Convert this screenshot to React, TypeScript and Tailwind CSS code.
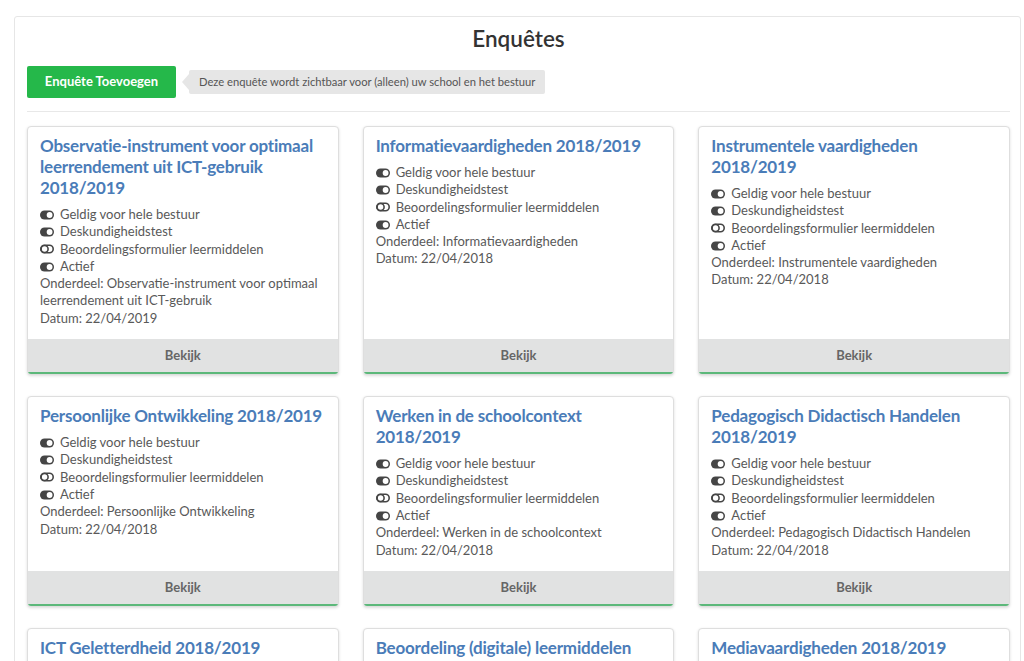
import React from "react";

type Survey = {
  id: number;
  title: string;
  onderdeel: string;
  datum: string;
};

const SURVEYS: Survey[] = [
  {
    id: 1,
    title: "Observatie-instrument voor optimaal leerrendement uit ICT-gebruik 2018/2019",
    onderdeel: "Observatie-instrument voor optimaal leerrendement uit ICT-gebruik",
    datum: "22/04/2019",
  },
  { id: 2, title: "Informatievaardigheden 2018/2019", onderdeel: "Informatievaardigheden", datum: "22/04/2018" },
  { id: 3, title: "Instrumentele vaardigheden 2018/2019", onderdeel: "Instrumentele vaardigheden", datum: "22/04/2018" },
  { id: 4, title: "Persoonlijke Ontwikkeling 2018/2019", onderdeel: "Persoonlijke Ontwikkeling", datum: "22/04/2018" },
  { id: 5, title: "Werken in de schoolcontext 2018/2019", onderdeel: "Werken in de schoolcontext", datum: "22/04/2018" },
  { id: 6, title: "Pedagogisch Didactisch Handelen 2018/2019", onderdeel: "Pedagogisch Didactisch Handelen", datum: "22/04/2018" },
  { id: 7, title: "ICT Geletterdheid 2018/2019", onderdeel: "ICT Geletterdheid", datum: "22/04/2018" },
  { id: 8, title: "Beoordeling (digitale) leermiddelen 2018/2019", onderdeel: "Beoordeling (digitale) leermiddelen", datum: "22/04/2018" },
  { id: 9, title: "Mediavaardigheden 2018/2019", onderdeel: "Mediavaardigheden", datum: "22/04/2018" },
];

const FLAGS = [
  { label: "Geldig voor hele bestuur", on: true },
  { label: "Deskundigheidstest", on: true },
  { label: "Beoordelingsformulier leermiddelen", on: false },
  { label: "Actief", on: true },
];

// font-awesome style toggle-on / toggle-off
function Toggle({ on }: { on: boolean }) {
  if (on) {
    return (
      <svg width="14" height="10" viewBox="0 0 14 10" className="shrink-0">
        <rect x="0" y="0.5" width="14" height="9" rx="4.5" fill="#454545" />
        <circle cx="9.6" cy="5" r="2.9" fill="#ffffff" />
      </svg>
    );
  }
  return (
    <svg width="14" height="10" viewBox="0 0 14 10" className="shrink-0">
      <rect x="0.8" y="1.3" width="12.4" height="7.4" rx="3.7" fill="none" stroke="#454545" strokeWidth="1.6" />
      <circle cx="4.6" cy="5" r="3.5" fill="#ffffff" stroke="#454545" strokeWidth="1.6" />
    </svg>
  );
}

function SurveyCard({ survey }: { survey: Survey }) {
  return (
    <div className="flex flex-col rounded-[4px] border border-[#dedede] bg-white shadow-[0_1px_3px_rgba(0,0,0,0.14)] overflow-hidden">
      <div className="flex-1 px-[12px] pt-2 pb-3">
        <h3 className="text-[17px] leading-[21px] font-bold tracking-[-0.2px] text-[#4a7cb8] mb-2">{survey.title}</h3>
        <ul className="text-[13px] leading-[17.3px] text-[#595959]">
          {FLAGS.map((f) => (
            <li key={f.label} className="flex items-center gap-[6px]">
              <Toggle on={f.on} />
              <span>{f.label}</span>
            </li>
          ))}
        </ul>
        <p className="text-[13px] leading-[17.3px] text-[#595959]">Onderdeel: {survey.onderdeel}</p>
        <p className="text-[13px] leading-[17.3px] text-[#595959]">Datum: {survey.datum}</p>
      </div>
      <button className="h-[35px] w-full bg-[#e1e2e2] border-b-2 border-[#5cb87a] text-[13px] font-bold text-[#666]">
        Bekijk
      </button>
    </div>
  );
}

export default function App() {
  return (
    <div className="min-h-screen bg-white font-['Lato',sans-serif] pt-4 pl-[14px] pr-[3px]">
      <div className="rounded-[3px] border border-[#e6e6e6] pt-[8px] pl-[12px] pr-[10px] pb-6">
        <h1 className="text-center text-[22.5px] leading-[28px] font-semibold text-[#333]">Enquêtes</h1>

        <div className="mt-[13px] flex items-center">
          <button className="h-8 w-[149px] rounded-[2px] bg-[#25b84a] text-[13px] font-bold text-white">
            Enquête Toevoegen
          </button>
          <span className="ml-[6px] h-0 w-0 border-y-[8px] border-y-transparent border-r-[7px] border-r-[#e6e6e6]" />
          <span className="flex h-6 items-center rounded-[2px] bg-[#e6e6e6] pl-[10px] pr-[10px] text-[11.2px] text-[#555]">
            Deze enquête wordt zichtbaar voor (alleen) uw school en het bestuur
          </span>
        </div>

        <div className="mt-[13px] border-t border-[#e8e8e8]" />

        <div className="mt-[14px] grid grid-cols-3 gap-x-6 gap-y-[21px]">
          {SURVEYS.map((s) => (
            <SurveyCard key={s.id} survey={s} />
          ))}
        </div>
      </div>
    </div>
  );
}
